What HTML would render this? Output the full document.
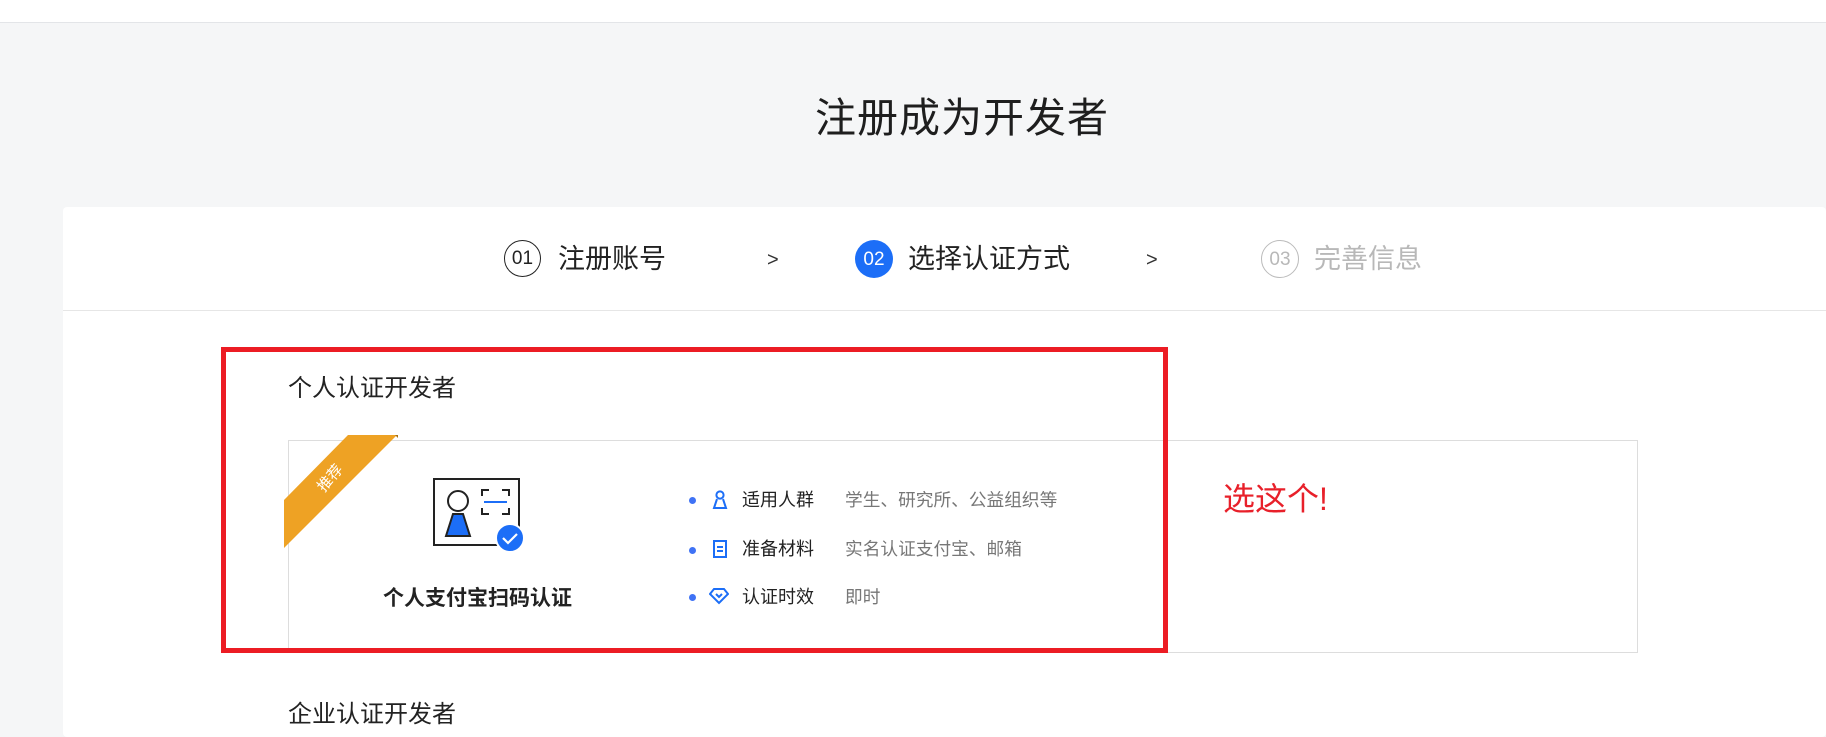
<!DOCTYPE html>
<html><head><meta charset="utf-8"><style>
*{margin:0;padding:0;box-sizing:border-box}
body{width:1826px;height:724px;overflow:hidden;background:#f5f6f7;font-family:"Liberation Sans","Noto Sans CJK SC",sans-serif;position:relative;color:#222}
.abs{position:absolute;white-space:nowrap}
</style></head><body>
<div class="abs" style="left:0;top:0;width:1826px;height:23px;background:#fff;border-bottom:1px solid #e3e5e8"></div>
<div class="abs" style="left:0;width:1826px;top:92px;text-align:center;font-size:41px;line-height:52px;color:#1e1e1e;padding-left:98px;letter-spacing:1px">注册成为开发者</div>
<div class="abs" style="left:63px;top:207px;width:1763px;height:530px;background:#fff;border-radius:4px"></div>
<div class="abs" style="left:63px;top:310px;width:1763px;height:1px;background:#e6e6e6"></div>

<div class="abs" style="left:504px;top:240px;width:37px;height:37px;border:1.5px solid #222;border-radius:50%;font-size:19px;line-height:36px;text-align:center;color:#222">01</div>
<div class="abs" style="left:558px;top:242px;font-size:27px;line-height:34px;color:#222">注册账号</div>
<div class="abs" style="left:767px;top:246px;font-size:20px;line-height:28px;color:#333">&gt;</div>
<div class="abs" style="left:855px;top:240px;width:38px;height:38px;background:#1c6ef7;border-radius:50%;font-size:19px;line-height:40px;text-align:center;color:#fff">02</div>
<div class="abs" style="left:908px;top:242px;font-size:27px;line-height:34px;color:#222">选择认证方式</div>
<div class="abs" style="left:1146px;top:246px;font-size:20px;line-height:28px;color:#333">&gt;</div>
<div class="abs" style="left:1261px;top:240px;width:38px;height:38px;border:1.5px solid #bbb;border-radius:50%;font-size:19px;line-height:37px;text-align:center;color:#b8b8b8">03</div>
<div class="abs" style="left:1314px;top:242px;font-size:27px;line-height:34px;color:#b8b8b8">完善信息</div>

<div class="abs" style="left:288px;top:374px;font-size:24px;line-height:30px;color:#222">个人认证开发者</div>
<div class="abs" style="left:288px;top:440px;width:1350px;height:213px;border:1px solid #ddd;background:#fff"></div>

<svg class="abs" style="left:283px;top:433px" width="120" height="120" viewBox="0 0 120 120">
<polygon points="65,2 114,2 1,115 1,67" fill="#eea224"/>
<polygon points="112,2 115,2 115,5" fill="#a87010"/>
<text x="47" y="50" fill="#fff" font-size="15" font-family="Noto Sans CJK SC,sans-serif" transform="rotate(-50 47 45)" text-anchor="middle">推荐</text>
</svg>

<svg class="abs" style="left:430px;top:478px" width="96" height="78" viewBox="0 0 96 78">
<rect x="4" y="1" width="85" height="66" fill="none" stroke="#222" stroke-width="2"/>
<circle cx="28" cy="23" r="10" fill="none" stroke="#222" stroke-width="2"/>
<polygon points="23,36 33,36 40,58 16,58" fill="#1c6ef7" stroke="#222" stroke-width="2"/>
<path d="M52 18v-6h7M72 12h7v6M52 30v6h7M72 36h7v-6" fill="none" stroke="#222" stroke-width="2"/>
<line x1="54" y1="24" x2="77" y2="24" stroke="#1c6ef7" stroke-width="2"/>
<circle cx="80" cy="60" r="14" fill="#1c6ef7" stroke="#fff" stroke-width="2"/>
<path d="M73 60l5 5 9-9" fill="none" stroke="#fff" stroke-width="2.2"/>
</svg>
<div class="abs" style="left:383px;top:585px;font-size:21px;font-weight:bold;line-height:28px;color:#222">个人支付宝扫码认证</div>

<div class="abs" style="left:689px;top:497px;width:7px;height:7px;border-radius:50%;background:#3f72f5"></div>
<svg class="abs" style="left:712px;top:490px" width="16" height="20" viewBox="0 0 16 20"><circle cx="8" cy="5" r="3.6" fill="none" stroke="#1c6ef7" stroke-width="2"/><path d="M5 9L2 18h12L11 9" fill="none" stroke="#1c6ef7" stroke-width="2"/></svg>
<div class="abs" style="left:742px;top:488px;font-size:18px;line-height:24px;color:#222">适用人群</div>
<div class="abs" style="left:845px;top:488px;font-size:17.7px;line-height:24px;color:#777">学生、研究所、公益组织等</div>

<div class="abs" style="left:689px;top:547px;width:7px;height:7px;border-radius:50%;background:#3f72f5"></div>
<svg class="abs" style="left:712px;top:539px" width="16" height="20" viewBox="0 0 16 20"><rect x="2" y="2" width="12" height="16" fill="none" stroke="#1c6ef7" stroke-width="2"/><path d="M5 8h6M5 12h6" stroke="#1c6ef7" stroke-width="2"/></svg>
<div class="abs" style="left:742px;top:537px;font-size:18px;line-height:24px;color:#222">准备材料</div>
<div class="abs" style="left:845px;top:537px;font-size:17.7px;line-height:24px;color:#777">实名认证支付宝、邮箱</div>

<div class="abs" style="left:689px;top:594px;width:7px;height:7px;border-radius:50%;background:#3f72f5"></div>
<svg class="abs" style="left:709px;top:587px" width="20" height="18" viewBox="0 0 20 18"><path d="M5 2h10l4 5-9 9-9-9z" fill="none" stroke="#1c6ef7" stroke-width="2"/><path d="M7 7l3 3 3-3" fill="none" stroke="#1c6ef7" stroke-width="2"/></svg>
<div class="abs" style="left:742px;top:585px;font-size:18px;line-height:24px;color:#222">认证时效</div>
<div class="abs" style="left:845px;top:585px;font-size:17.7px;line-height:24px;color:#777">即时</div>

<div class="abs" style="left:221px;top:347px;width:947px;height:306px;border:5px solid #ec1c24"></div>
<div class="abs" style="left:1223px;top:480px;font-size:32px;line-height:38px;color:#e8202a">选这个!</div>

<div class="abs" style="left:288px;top:700px;font-size:24px;line-height:30px;color:#222">企业认证开发者</div>
</body></html>
